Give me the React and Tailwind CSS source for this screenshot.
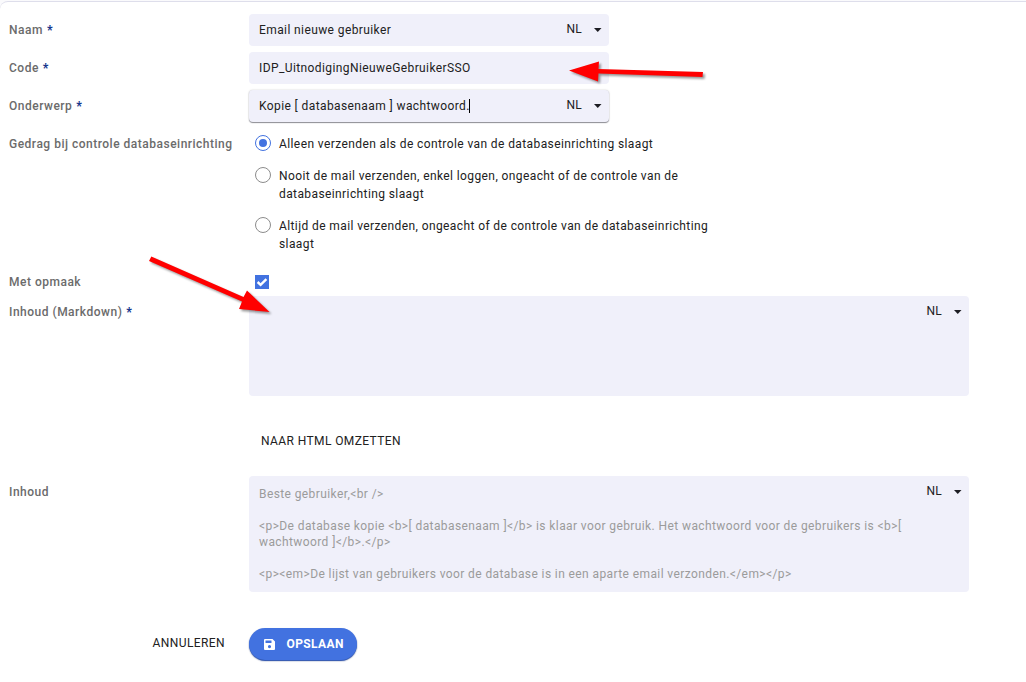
import React from "react";

function Label({ children, required, className = "" }) {
  return (
    <div className={`w-[240px] shrink-0 whitespace-nowrap font-medium leading-[18px] tracking-[0.5px] text-[#6b6b6b] ${className}`}>
      {children}
      {required && <span className="ml-1 font-black text-[#16368c]">*</span>}
    </div>
  );
}

function Caret() {
  return (
    <svg width="8" height="4" viewBox="0 0 8 4" className="mt-[2px]">
      <path d="M0 0h7.5L3.75 4z" fill="#1c1c22" />
    </svg>
  );
}

function Language({ className = "" }) {
  return (
    <button className={`flex shrink-0 items-center gap-[11px] pr-[7px] leading-[18px] text-[#212121] ${className}`}>
      <span className="-ml-px mr-px tracking-[0.3px]">NL</span>
      <Caret />
    </button>
  );
}

function TextField({ label, value, language, focused }) {
  return (
    <div className="flex h-8 items-center">
      <Label required>{label}</Label>
      <div
        className={`flex h-8 w-[360px] items-center justify-between rounded-[4px] bg-[#f0f0fa] pl-[10px] ${
          focused ? "shadow-[0_1px_1px_#8d8d94,0_0_2px_rgba(0,0,0,0.2)]" : ""
        }`}
      >
        <span className="flex items-center whitespace-nowrap leading-[18px]">
          {value}
          {focused && <span className="-ml-px h-[14px] w-px bg-black" />}
        </span>
        {language && <Language className="-mt-[2px]" />}
      </div>
    </div>
  );
}

function Radio({ checked, children }) {
  return (
    <div className="flex items-start gap-2">
      <span
        className={`flex size-4 shrink-0 items-center justify-center rounded-full border bg-white ${
          checked ? "border-[#4272e0]" : "border-[#8c8c8c]"
        }`}
      >
        {checked && <span className="size-2 rounded-full bg-[#4272e0]" />}
      </span>
      <span className="leading-[18px]">{children}</span>
    </div>
  );
}

function Arrows() {
  return (
    <svg
      width="1026"
      height="682"
      viewBox="0 0 1026 682"
      className="pointer-events-none absolute left-0 top-0 drop-shadow-[2px_2px_1px_rgba(0,0,0,0.4)]"
    >
      <g fill="#ff0000">
        <path d="M569 70.5L599 61.5L598.5 69L703 72L702.5 77L598.5 73.5L598 81.5Z" />
        <path d="M151.3 256.5L243.5 297L247 290.5L269.5 312L239 309L242 301.5L149 261Z" />
      </g>
    </svg>
  );
}

export default function App() {
  return (
    <div className="relative h-[682px] w-[1026px] overflow-hidden bg-[#fafafc] pt-px font-['Roboto',sans-serif] text-[12px] tracking-[0.4px] text-[#212121]">
      <main className="h-[690px] w-[1034px] rounded-tl-[8px] border-t border-[#dedeeb] bg-white pl-[9px] pt-3">
        <div className="flex flex-col gap-[6px]">
          <TextField label="Naam" value="Email nieuwe gebruiker" language />
          <TextField label="Code" value="IDP_UitnodigingNieuweGebruikerSSO" />
          <TextField label="Onderwerp" value="Kopie [ databasenaam ] wachtwoord." language focused />
        </div>

        <div className="mt-[13px] flex">
          <Label>Gedrag bij controle databaseinrichting</Label>
          <div className="flex w-[480px] flex-col gap-[14px] pl-[6px]">
            <Radio checked>Alleen verzenden als de controle van de databaseinrichting slaagt</Radio>
            <Radio>
              Nooit de mail verzenden, enkel loggen, ongeacht of de controle van de
              <br />
              databaseinrichting slaagt
            </Radio>
            <Radio>
              Altijd de mail verzenden, ongeacht of de controle van de databaseinrichting
              <br />
              slaagt
            </Radio>
          </div>
        </div>

        <div className="mt-5 flex h-[18px] items-center">
          <Label>Met opmaak</Label>
          <span className="ml-[6px] flex size-[14px] items-center justify-center bg-[#4272e0]">
            <svg width="14" height="14" viewBox="0 0 14 14" fill="none" stroke="white" strokeWidth="2.4">
              <path d="M2.6 7L5.6 9.8L11.4 4.2" />
            </svg>
          </span>
        </div>

        <div className="mt-[5px] flex">
          <Label required className="pt-[7px]">Inhoud (Markdown)</Label>
          <div className="flex h-[100px] w-[720px] items-start justify-end rounded-[4px] bg-[#f0f0fa] pt-[6px]">
            <Language />
          </div>
        </div>

        <button className="ml-[252px] mt-9 block h-[18px] leading-[18px]">NAAR HTML OMZETTEN</button>

        <div className="mt-[26px] flex">
          <Label className="pt-[7px]">Inhoud</Label>
          <div className="flex h-[116px] w-[720px] items-start justify-between rounded-[4px] bg-[#f0f0fa] pl-[10px] pt-[6px]">
            <div className="whitespace-pre pt-[4px] leading-4 text-[#9b9b9b]">
              {"Beste gebruiker,<br />\n\n<p>De database kopie <b>[ databasenaam ]</b> is klaar voor gebruik. Het wachtwoord voor de gebruikers is <b>[\nwachtwoord ]</b>.</p>\n\n<p><em>De lijst van gebruikers voor de database is in een aparte email verzonden.</em></p>"}
            </div>
            <Language />
          </div>
        </div>

        <div className="mt-9 flex h-8 items-center">
          <button className="-mt-[2px] w-[216px] text-right">ANNULEREN</button>
          <button className="ml-6 flex h-8 w-[108px] items-center rounded-full bg-[#4272e0] pl-[15px] font-bold text-white shadow-[0_1px_1px_#2950ae,0_1px_2px_rgba(0,0,0,0.2)]">
            <svg width="11" height="11" viewBox="0 0 11 11" fill="white">
              <path fillRule="evenodd" d="M1 0H8.5L11 2.5V10a1 1 0 0 1-1 1H1a1 1 0 0 1-1-1V1a1 1 0 0 1 1-1ZM1.5 1.5V4H7.5V1.5ZM5.5 6A1.6 1.6 0 1 0 5.5 9.2A1.6 1.6 0 1 0 5.5 6Z" />
            </svg>
            <span className="ml-[11.5px]">OPSLAAN</span>
          </button>
        </div>
      </main>
      <Arrows />
    </div>
  );
}
